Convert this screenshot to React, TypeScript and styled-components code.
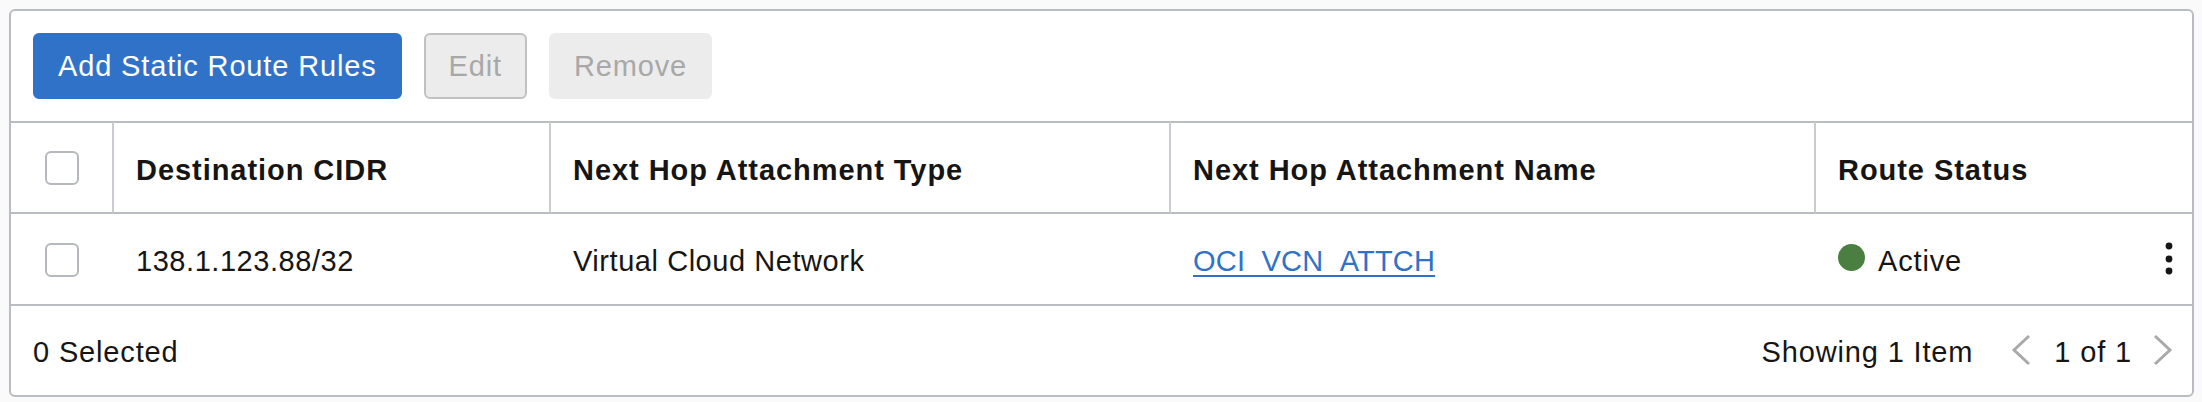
import React from "react";
import styled, { createGlobalStyle, css } from "styled-components";

const GlobalStyle = createGlobalStyle`
  html, body {
    margin: 0;
    padding: 0;
    background: #fafafa;
  }
  body {
    font-family: "Liberation Sans", Arial, Helvetica, sans-serif;
    color: #161513;
  }
  * { box-sizing: border-box; }
`;

const LINE = "#b9bdc1";
const SEP = "#c9ccd0";

const Page = styled.div`
  padding: 9px 8px 5px 9px;
`;

const Panel = styled.div`
  border: 2px solid ${LINE};
  border-radius: 6px;
  background: #ffffff;
  overflow: hidden;
`;

const Toolbar = styled.div`
  display: flex;
  gap: 22px;
  padding: 22px;
`;

const Button = styled.button<{ $variant: "primary" | "outline" | "disabled" }>`
  height: 66px;
  padding: 0 23px;
  border: 2px solid;
  border-radius: 6px;
  font-family: "Liberation Sans", Arial, sans-serif;
  font-size: 29px;
  letter-spacing: 0.85px;
  line-height: 1;
  cursor: pointer;
  ${({ $variant }) =>
    $variant === "primary"
      ? css`
          background: #3072c8;
          border-color: #3072c8;
          color: #ffffff;
        `
      : $variant === "outline"
      ? css`
          background: #ececec;
          border-color: #bfc1c3;
          color: #a8a8a8;
        `
      : css`
          background: #ececec;
          border-color: #ececec;
          color: #a8a8a8;
        `}
`;

const Grid = styled.div`
  display: grid;
  grid-template-columns: 103px 437px 620px 645px 1fr;
`;

const HeaderCell = styled.div<{ $last?: boolean; $center?: boolean }>`
  height: 93px;
  border-top: 2px solid ${LINE};
  border-bottom: 2px solid ${LINE};
  border-right: ${({ $last }) => ($last ? "none" : `2px solid ${SEP}`)};
  display: flex;
  align-items: center;
  justify-content: ${({ $center }) => ($center ? "center" : "flex-start")};
  padding-left: ${({ $center }) => ($center ? "0" : "22px")};
  padding-top: ${({ $center }) => ($center ? "1px" : "5px")};
  font-size: 29px;
  font-weight: 700;
  letter-spacing: 0.95px;
  color: #161513;
`;

const BodyCell = styled.div<{ $center?: boolean; $spread?: boolean }>`
  height: 92px;
  border-bottom: 2px solid ${LINE};
  display: flex;
  align-items: center;
  justify-content: ${({ $center, $spread }) =>
    $center ? "center" : $spread ? "space-between" : "flex-start"};
  padding-left: ${({ $center }) => ($center ? "0" : "22px")};
  padding-right: ${({ $center, $spread }) =>
    $center ? "2px" : $spread ? "19px" : "0"};
  padding-top: ${({ $center }) => ($center ? "2px" : "5px")};
  font-size: 29px;
  letter-spacing: 0.55px;
  color: #161513;
`;

const Checkbox = styled.span`
  display: inline-block;
  width: 34px;
  height: 34px;
  border: 2px solid #b5b8bc;
  border-radius: 6px;
  background: #ffffff;
`;

const Link = styled.a`
  color: #2f72c8;
  text-decoration: underline;
  text-decoration-thickness: 2px;
  text-underline-offset: 4px;
  letter-spacing: 0.2px;
  cursor: pointer;
`;

const Status = styled.span`
  display: inline-flex;
  align-items: center;
  gap: 13px;
  letter-spacing: 0.85px;
`;

const Dot = styled.span`
  display: inline-block;
  width: 27px;
  height: 27px;
  border-radius: 50%;
  background: #4b7f42;
  margin-top: -9px;
`;

const KebabWrap = styled.span`
  display: inline-flex;
  margin-top: -5px;
`;

const Footer = styled.div`
  height: 89px;
  display: flex;
  align-items: center;
  justify-content: space-between;
  padding: 4px 18px 0 22px;
  font-size: 29px;
  letter-spacing: 0.85px;
  color: #161513;
`;

const Pager = styled.div`
  display: flex;
  align-items: center;
`;

const PagerText = styled.span<{ $gap: number }>`
  margin-right: ${({ $gap }) => $gap}px;
`;

const ChevronBtn = styled.span<{ $gap?: number }>`
  display: inline-flex;
  margin-right: ${({ $gap }) => $gap ?? 0}px;
  margin-top: -6px;
`;

const Kebab = () => (
  <KebabWrap>
    <svg width="8" height="34" viewBox="0 0 8 34" aria-hidden>
      <circle cx="4" cy="4" r="3.4" fill="#161513" />
      <circle cx="4" cy="17" r="3.4" fill="#161513" />
      <circle cx="4" cy="29" r="3.4" fill="#161513" />
    </svg>
  </KebabWrap>
);

const Chevron = ({ dir }: { dir: "left" | "right" }) => (
  <svg width="22" height="32" viewBox="0 0 22 32" aria-hidden>
    <polyline
      points={dir === "left" ? "19,2 4,16 19,30" : "3,2 18,16 3,30"}
      fill="none"
      stroke="#a9a9a9"
      strokeWidth="3"
    />
  </svg>
);

export default function App() {
  return (
    <>
      <GlobalStyle />
      <Page>
        <Panel>
          <Toolbar>
            <Button $variant="primary">Add Static Route Rules</Button>
            <Button $variant="outline">Edit</Button>
            <Button $variant="disabled">Remove</Button>
          </Toolbar>
          <Grid>
            <HeaderCell $center>
              <Checkbox />
            </HeaderCell>
            <HeaderCell>Destination CIDR</HeaderCell>
            <HeaderCell>Next Hop Attachment Type</HeaderCell>
            <HeaderCell>Next Hop Attachment Name</HeaderCell>
            <HeaderCell $last>Route Status</HeaderCell>

            <BodyCell $center>
              <Checkbox />
            </BodyCell>
            <BodyCell>138.1.123.88/32</BodyCell>
            <BodyCell>Virtual Cloud Network</BodyCell>
            <BodyCell>
              <Link>OCI_VCN_ATTCH</Link>
            </BodyCell>
            <BodyCell $spread>
              <Status>
                <Dot />
                Active
              </Status>
              <Kebab />
            </BodyCell>
          </Grid>
          <Footer>
            <span>0 Selected</span>
            <Pager>
              <PagerText $gap={37}>Showing 1 Item</PagerText>
              <ChevronBtn $gap={22}>
                <Chevron dir="left" />
              </ChevronBtn>
              <PagerText $gap={20}>1 of 1</PagerText>
              <ChevronBtn>
                <Chevron dir="right" />
              </ChevronBtn>
            </Pager>
          </Footer>
        </Panel>
      </Page>
    </>
  );
}
